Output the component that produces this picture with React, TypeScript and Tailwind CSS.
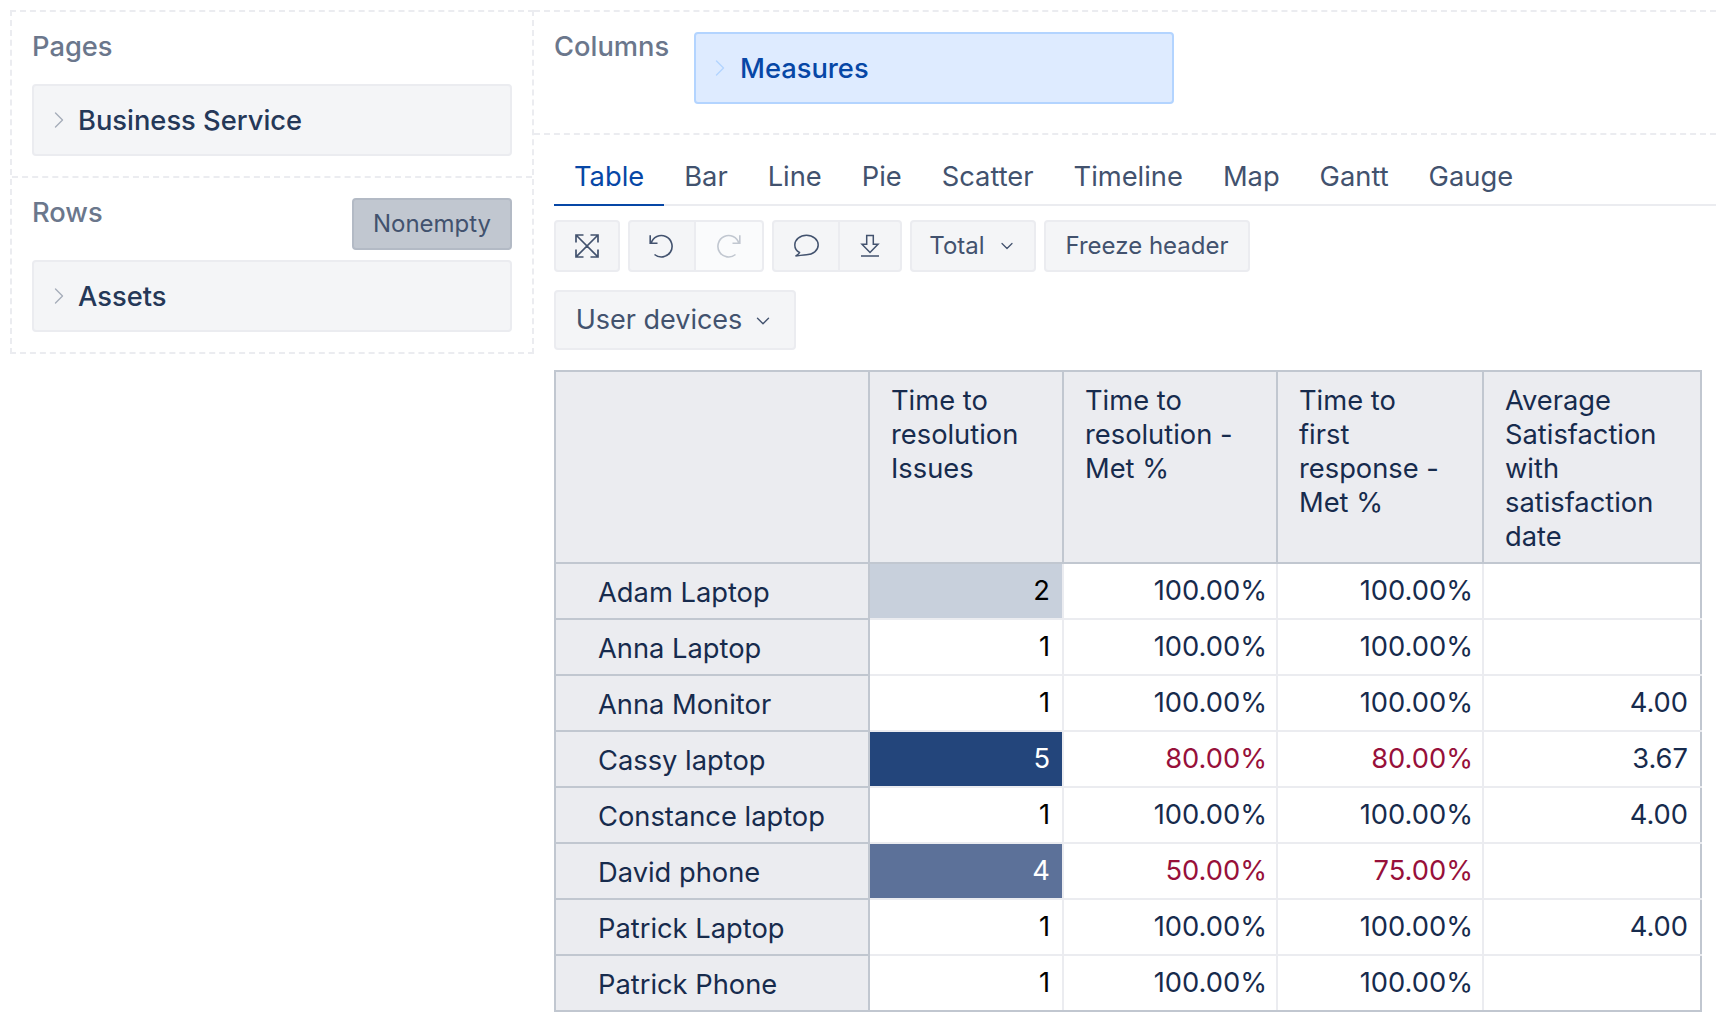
import { ChevronDown, ChevronRight } from 'lucide-react';

const tabs = ['Table', 'Bar', 'Line', 'Pie', 'Scatter', 'Timeline', 'Map', 'Gantt', 'Gauge'];

const RED = 'text-[#97103a]';

interface Row {
  name: string;
  issues: number;
  heat?: string;
  resolution: string;
  response: string;
  satisfaction?: string;
  bad?: boolean;
}

const rows: Row[] = [
  { name: 'Adam Laptop', issues: 2, heat: 'bg-[#c8d0dc] text-black', resolution: '100.00%', response: '100.00%' },
  { name: 'Anna Laptop', issues: 1, resolution: '100.00%', response: '100.00%' },
  { name: 'Anna Monitor', issues: 1, resolution: '100.00%', response: '100.00%', satisfaction: '4.00' },
  { name: 'Cassy laptop', issues: 5, heat: 'bg-[#23457b] text-white', resolution: '80.00%', response: '80.00%', satisfaction: '3.67', bad: true },
  { name: 'Constance laptop', issues: 1, resolution: '100.00%', response: '100.00%', satisfaction: '4.00' },
  { name: 'David phone', issues: 4, heat: 'bg-[#5c7199] text-white', resolution: '50.00%', response: '75.00%', bad: true },
  { name: 'Patrick Laptop', issues: 1, resolution: '100.00%', response: '100.00%', satisfaction: '4.00' },
  { name: 'Patrick Phone', issues: 1, resolution: '100.00%', response: '100.00%' },
];

const headers = [
  'Time to resolution Issues',
  'Time to resolution - Met %',
  'Time to first response - Met %',
  'Average Satisfaction with satisfaction date',
];

function Chip({ label }: { label: string }) {
  return (
    <div className="flex h-[72px] items-center rounded-[4px] border-2 border-[#ebecf0] bg-[#f4f5f7] pl-[11px] text-[27.3px] font-medium text-[#253858]">
      <ChevronRight className="mr-[5px] h-[28px] w-[28px] text-[#a5adba]" strokeWidth={1.2} />
      <span className="pt-[2px]">{label}</span>
    </div>
  );
}

function ExpandIcon() {
  return (
    <svg className="h-[28px] w-[28px]" viewBox="0 0 28 28" fill="none" stroke="currentColor" strokeWidth="1.7">
      <path d="M3 3l22 22M25 3L3 25M3 10.500V3h7.500M17.500 3H25v7.500M25 17.500V25h-7.500M10.500 25H3v-7.500" />
    </svg>
  );
}

function UndoIcon({ flip }: { flip?: boolean }) {
  return (
    <svg className={`h-[28px] w-[28px] ${flip ? '-scale-x-100' : '-translate-x-[1px]'}`} viewBox="0 0 28 28" fill="none" stroke="currentColor" strokeWidth="1.6">
      <path d="M3.200 3.300V11.300H10.500M4.100 11.300A10.700 10.700 0 1 1 7.500 22.500" />
    </svg>
  );
}

function CommentIcon() {
  return (
    <svg className="h-[28px] w-[28px]" viewBox="0 0 28 28" fill="none" stroke="currentColor" strokeWidth="1.5">
      <path d="M7.500 20.500C4.200 18.800 2.800 16 2.800 13C2.800 7.600 8 3.300 14.500 3.300C21 3.300 26.200 7.600 26.200 13C26.200 18.400 21 22.700 14.500 22.700C11 22.700 7 23.800 3.500 24C5.500 22.800 7.200 22 7.500 20.500Z" />
    </svg>
  );
}

function DownloadIcon() {
  return (
    <svg className="h-[28px] w-[28px]" viewBox="0 0 28 28" fill="none" stroke="currentColor" strokeWidth="1.5">
      <path d="M10.700 3.500h6.600v8.800h4.700L14 20.500 6 12.300h4.700zM5 24h18" />
    </svg>
  );
}

const toolBtn = 'flex h-[52px] items-center justify-center border-2 border-[#ebecf0] bg-[#f4f5f7] text-[#42526e]';

export default function App() {
  return (
    <div className="flex min-h-[1022px] bg-white pl-[10px] pt-[10px] font-['Inter',sans-serif] text-[#172b4d]">
      <aside className="h-[344px] w-[524px] shrink-0 border-2 border-dashed border-[#ebecf0]">
        <section className="h-[166px] border-b-2 border-dashed border-[#ebecf0] px-[20px] pt-[18px]">
          <div className="mb-[20px] text-[27.3px] leading-[34px] font-medium text-[#6b778c]">Pages</div>
          <Chip label="Business Service" />
        </section>
        <section className="px-[20px] pt-[18px]">
          <div className="mb-[10px] flex items-start justify-between">
            <div className="text-[27.3px] leading-[34px] font-medium text-[#6b778c]">Rows</div>
            <button className="mt-[2px] h-[52px] w-[160px] rounded-[4px] border-2 border-[#b3bac5] bg-[#c1c7d0] text-[24px] text-[#42526e]">
              Nonempty
            </button>
          </div>
          <Chip label="Assets" />
        </section>
      </aside>

      <main className="min-w-0 flex-1">
        <section className="flex h-[125px] border-y-2 border-dashed border-[#ebecf0] pl-[20px] pt-[20px]">
          <div className="-mt-[2px] w-[140px] text-[27.3px] leading-[34px] font-medium text-[#6b778c]">Columns</div>
          <div className="flex h-[72px] w-[480px] items-center rounded-[4px] border-2 border-[#b3d4ff] bg-[#deebff] pl-[10px] text-[27.3px] font-medium text-[#0747a6]">
            <ChevronRight className="mr-[6px] h-[28px] w-[28px] text-[#b3d4ff]" strokeWidth={1.2} />
            <span className="pt-[2px]">Measures</span>
          </div>
        </section>

        <div className="pl-[20px]">
          <nav className="flex h-[71px] border-b-2 border-[#ebecf0]">
            {tabs.map((tab) => (
              <div
                key={tab}
                className={`h-[71px] border-b-2 px-[20px] pt-[25px] text-[27.3px] leading-[34px] ${
                  tab === 'Table' ? 'border-[#0747a6] text-[#0747a6]' : 'border-transparent text-[#42526e]'
                }`}
              >
                {tab}
              </div>
            ))}
          </nav>

          <div className="mt-[14px] flex gap-[8px]">
            <button className={`${toolBtn} w-[66px] rounded-[4px]`}>
              <ExpandIcon />
            </button>
            <div className="flex">
              <button className={`${toolBtn} w-[68px] rounded-l-[4px]`}>
                <UndoIcon />
              </button>
              <button className={`${toolBtn} w-[68px] rounded-r-[4px] border-l-0 bg-[#fafbfc] text-[#c1c7d0]`}>
                <UndoIcon flip />
              </button>
            </div>
            <div className="flex">
              <button className={`${toolBtn} w-[68px] rounded-l-[4px]`}>
                <CommentIcon />
              </button>
              <button className={`${toolBtn} w-[62px] rounded-r-[4px] border-l-0`}>
                <DownloadIcon />
              </button>
            </div>
            <button className={`${toolBtn} w-[126px] gap-[12px] rounded-[4px] text-[24px]`}>
              Total
              <ChevronDown className="h-[20px] w-[20px]" strokeWidth={1.5} />
            </button>
            <button className={`${toolBtn} w-[206px] rounded-[4px] text-[24px]`}>Freeze header</button>
          </div>

          <button className={`${toolBtn} mt-[18px] !h-[60px] w-[242px] gap-[10px] rounded-[4px] pt-[1px] text-[27px]`}>
            User devices
            <ChevronDown className="h-[22px] w-[22px]" strokeWidth={1.5} />
          </button>

          <table className="mt-[20px] w-[1146px] table-fixed border-collapse text-[27.3px] leading-[34px]">
            <colgroup>
              <col className="w-[314px]" />
              <col className="w-[194px]" />
              <col className="w-[214px]" />
              <col className="w-[206px]" />
              <col className="w-[218px]" />
            </colgroup>
            <thead>
              <tr className="h-[192px]">
                <th className="border-2 border-[#c1c7d0] bg-[#ebecf0]" />
                {headers.map((h) => (
                  <th
                    key={h}
                    className="border-2 border-[#c1c7d0] bg-[#ebecf0] pt-[12px] pr-[36px] pl-[21px] text-left align-top font-normal"
                  >
                    {h}
                  </th>
                ))}
              </tr>
            </thead>
            <tbody>
              {rows.map((r, i) => {
                const bottom = i === rows.length - 1 ? 'border-b-[#c1c7d0]' : '';
                return (
                  <tr key={r.name} className="h-[56px]">
                    <th className="border-2 border-[#c1c7d0] bg-[#ebecf0] pt-[4px] pl-[42px] text-left font-normal">{r.name}</th>
                    <td className={`border-2 border-[#ebecf0] pr-[12px] pb-[1px] text-right ${r.heat ?? 'text-black'} ${bottom}`}>{r.issues}</td>
                    <td className={`border-2 border-[#ebecf0] pr-[9px] pb-[1px] text-right ${r.bad ? RED : ''} ${bottom}`}>{r.resolution}</td>
                    <td className={`border-2 border-[#ebecf0] pr-[9px] pb-[1px] text-right ${r.bad ? RED : ''} ${bottom}`}>{r.response}</td>
                    <td className={`border-2 border-[#ebecf0] border-r-[#c1c7d0] pr-[12px] pb-[1px] text-right ${bottom}`}>{r.satisfaction}</td>
                  </tr>
                );
              })}
            </tbody>
          </table>
        </div>
      </main>
    </div>
  );
}
